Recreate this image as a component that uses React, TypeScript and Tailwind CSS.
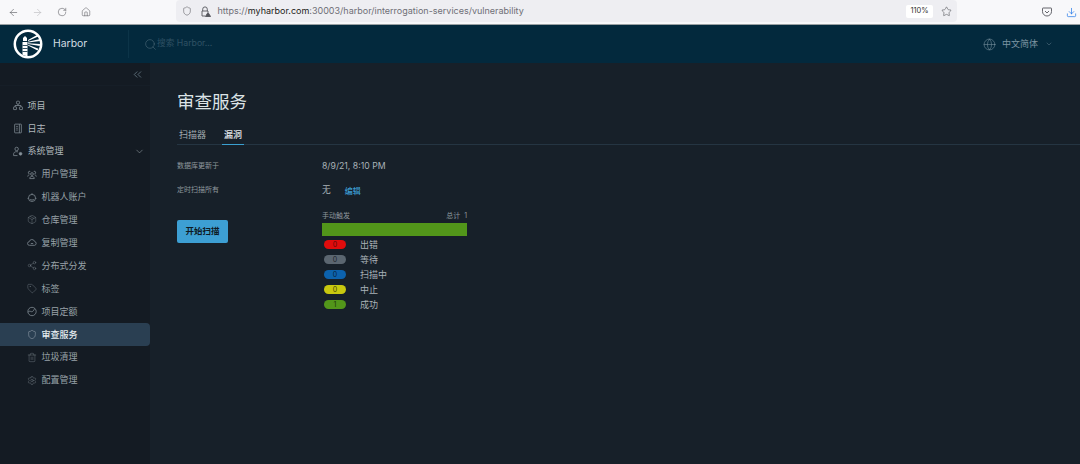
import {
  ArrowLeft,
  ArrowRight,
  ChevronDown,
  ChevronsLeft,
  Download,
  Globe,
  Home,
  Package,
  RotateCw,
  Search,
  Settings,
  Share2,
  Shield,
  Star,
  Tag,
  Trash2,
} from "lucide-react";
import type { ReactNode } from "react";

const font = "font-['Inter','Noto_Sans_CJK_SC',sans-serif]";

function Logo() {
  return (
    <svg width="30" height="30" viewBox="0 0 30 30" fill="none">
      <circle cx="15" cy="15" r="13.2" stroke="#fff" strokeWidth="2.5" />
      <path d="M9.500 13h5v14.500l-5-1.800z" fill="#fff" />
      <path d="M10 12V9l2-2 2 2v3z" fill="#fff" />
      <path d="M15 11l9-5 1.200 1.500L15 12zM15 12.800l12-2.800.3 2L15 13.500zM15 14.300l12 .7-.2 2L15 15zM15 15.700l10.500 4-1 1.700L15 16.500z" fill="#fff" />
      <path d="M9.500 16.500h5M9.500 19.500h5M9.500 22.500h5" stroke="#03293d" strokeWidth="0.8" />
    </svg>
  );
}

function Glyph({ children }: { children: ReactNode }) {
  return (
    <svg width="11" height="11" viewBox="0 0 11 11" fill="none" stroke="currentColor" strokeWidth="0.8">
      {children}
    </svg>
  );
}

const projectIcon = (
  <Glyph>
    <rect x="3.800" y="0.800" width="3.400" height="3" rx="1" />
    <path d="M5.500 3.800v1.700M2.200 7V5.500h6.600V7" />
    <rect x="0.500" y="7" width="3.400" height="3" rx="0.600" />
    <rect x="7.100" y="7" width="3.400" height="3" rx="0.600" />
  </Glyph>
);

const logIcon = (
  <Glyph>
    <rect x="1.800" y="0.700" width="7.400" height="9.600" rx="0.500" />
    <path d="M7 0.700v9.600M3.500 3.200h1.800M3.500 5.200h1.800M3.500 7.200h1.800" />
  </Glyph>
);

const adminIcon = (
  <Glyph>
    <circle cx="4" cy="2.700" r="1.900" />
    <path d="M0.700 10V8c0-1.300 1.300-2.300 3.300-2.300.6 0 1.100.1 1.500.2M0.700 10H5" />
    <circle cx="8.300" cy="8" r="1.500" fill="currentColor" />
  </Glyph>
);

const usersIcon = (
  <Glyph>
    <circle cx="5.500" cy="5" r="1.500" />
    <path d="M3 10c0-1.500 1-2.500 2.500-2.500S8 8.500 8 10zM2.800 4.600a1.300 1.300 0 1 1 .8-2.300M8.200 4.600a1.300 1.300 0 1 0-.8-2.300M0.800 7.800c0-1.200.8-1.900 1.800-1.900M10.200 7.800c0-1.200-.8-1.900-1.800-1.900" />
  </Glyph>
);

const robotIcon = (
  <Glyph>
    <circle cx="5.500" cy="6" r="3.900" />
    <path d="M5.500 2.100V.800M3.500 7.600c1.200.8 2.800.8 4 0M0.600 6.500h1M9.400 6.500h1" />
  </Glyph>
);

const cloudIcon = (
  <Glyph>
    <path d="M2.700 8.600a2 2 0 0 1-.2-4 3 3 0 0 1 5.800-.3 2.200 2.200 0 0 1 .1 4.300z" />
    <path d="M4.200 6.600h2.600" />
  </Glyph>
);

const quotaIcon = (
  <Glyph>
    <circle cx="5.500" cy="5.500" r="4.600" />
    <path d="M1 6.300c1.600-1.900 2.600-.9 4-.6 1.300.3 2.400-1.500 3.400-3.400" />
  </Glyph>
);

const pocketIcon = (
  <svg width="10" height="10" viewBox="0 0 10 10" fill="none" stroke="currentColor" strokeWidth="0.9">
    <path d="M1 1h8a.5.5 0 0 1 .5.5v3a4.500 4.500 0 0 1-9 0v-3A.5.5 0 0 1 1 1z" />
    <path d="M3 4l2 2 2-2" />
  </svg>
);

const lockIcon = (
  <svg width="11" height="11" viewBox="0 0 11 11" fill="none" stroke="currentColor" strokeWidth="0.9">
    <path d="M2.700 5V3.200a2.300 2.300 0 0 1 4.600 0V5" />
    <path d="M5 10H2V5h6v1" />
    <path d="M8 6.500l2.600 4H5.400z" fill="currentColor" />
  </svg>
);

function NavItem({
  icon,
  label,
  sub,
  active,
  trailing,
}: {
  icon: ReactNode;
  label: string;
  sub?: boolean;
  active?: boolean;
  trailing?: ReactNode;
}) {
  return (
    <div
      className={`flex h-[22.900px] w-[150px] items-center rounded-r-[4px] text-[9px] ${
        sub ? "pl-[27px]" : "pl-[13px]"
      } ${active ? "bg-[#2a3f52] font-medium text-[#e6edf0]" : sub ? "text-[#98a2a8]" : "text-[#b0b8bc]"}`}
    >
      <span className={`flex w-[10px] justify-center ${active ? "text-[#c8d2d8]" : "text-[#87929a]"}`}>{icon}</span>
      <span className="ml-[4.600px]">{label}</span>
      {trailing}
    </div>
  );
}

function StatusRow({ color, count, text, label }: { color: string; count: number; text: string; label: string }) {
  return (
    <div className="flex h-[15.100px] items-center pl-[2px]">
      <span
        className={`flex h-[9px] w-[22px] items-center justify-center rounded-full text-[7px] leading-none ${color} ${text}`}
      >
        {count}
      </span>
      <span className="ml-[14px] -translate-y-[0.5px] text-[9px] text-[#a9b2b7]">{label}</span>
    </div>
  );
}

export default function App() {
  const i = 11;
  const s = 0.9;
  return (
    <div className={`flex h-[464px] w-[1080px] flex-col overflow-hidden bg-[#172029] ${font}`}>
      {/* browser toolbar */}
      <div className="box-content flex h-[24px] flex-none items-center border-b border-[#9aa0a3] bg-[#f8f8fa]">
        <ArrowLeft size={11} strokeWidth={1.3} className="ml-[8px] flex-none text-[#55565c]" />
        <ArrowRight size={11} strokeWidth={1.3} className="ml-[13px] flex-none text-[#b8b8bc]" />
        <RotateCw size={10} strokeWidth={1.3} className="ml-[14px] flex-none text-[#55565c]" />
        <Home size={10} strokeWidth={1.3} className="ml-[14px] flex-none text-[#55565c]" />
        <div className="ml-[84.500px] flex h-[22px] w-[781.500px] flex-none items-center self-start rounded-[4px] bg-[#eeeef2] pl-[6px] pr-[5.500px]">
          <Shield size={10} strokeWidth={1.3} className="flex-none text-[#55565c]" />
          <span className="ml-[8px] flex-none text-[#55565c]">{lockIcon}</span>
          <span className="ml-[7px] whitespace-nowrap text-[9px] text-[#6f6f76]">
            https://<span className="text-[#1d1d20]">myharbor.com</span>:30003/harbor/interrogation-services/vulnerability
          </span>
          <div className="ml-auto flex items-center">
            <span className="flex h-[13px] w-[27px] items-center justify-center rounded-[2px] bg-white text-[7.500px] text-[#333]">
              110%
            </span>
            <Star size={11} strokeWidth={1.3} className="ml-[7.500px] text-[#55565c]" />
          </div>
        </div>
        <span className="ml-[85px] flex-none text-[#55565c]">{pocketIcon}</span>
        <Download size={11} strokeWidth={1.5} className="ml-[13.500px] flex-none text-[#1a73e8]" />
      </div>

      {/* harbor header */}
      <div className="flex h-[38px] flex-none items-center bg-[#03293d]">
        <div className="flex h-[28px] w-[129px] flex-none items-center border-r border-[#0c3448] pl-[13px]">
          <Logo />
          <span className="ml-[10px] text-[10.400px] text-[#d3dde2]">Harbor</span>
        </div>
        <Search size={13} strokeWidth={1} className="ml-[15px] flex-none text-[#54707f]" />
        <span className="text-[8.700px] text-[#2f5164]">搜索 Harbor...</span>
        <div className="ml-auto flex items-center pr-[27px] text-[#7e96a3]">
          <Globe size={13} strokeWidth={1} />
          <span className="ml-[6px] text-[9px]">中文简体</span>
          <ChevronDown size={8} strokeWidth={1.2} className="ml-[7px]" />
        </div>
      </div>

      <div className="flex min-h-0 flex-1">
        {/* sidebar */}
        <aside className="w-[150px] flex-none bg-[#141b23]">
          <div className="flex h-[23px] items-center justify-end border-b border-[#161e27] pr-[6px] text-[#7b919e]">
            <ChevronsLeft size={13} strokeWidth={1.2} />
          </div>
          <div className="pt-[8px]">
            <NavItem icon={projectIcon} label="项目" />
            <NavItem icon={logIcon} label="日志" />
            <NavItem
              icon={adminIcon}
              label="系统管理"
              trailing={<ChevronDown size={11} strokeWidth={1.2} className="ml-auto mr-[5.500px] text-[#9aa5ab]" />}
            />
            <NavItem sub icon={usersIcon} label="用户管理" />
            <NavItem sub icon={robotIcon} label="机器人账户" />
            <NavItem sub icon={<Package size={i} strokeWidth={s} />} label="仓库管理" />
            <NavItem sub icon={cloudIcon} label="复制管理" />
            <NavItem sub icon={<Share2 size={i} strokeWidth={s} />} label="分布式分发" />
            <NavItem sub icon={<Tag size={i} strokeWidth={s} />} label="标签" />
            <NavItem sub icon={quotaIcon} label="项目定额" />
            <NavItem sub active icon={<Shield size={i} strokeWidth={s} />} label="审查服务" />
            <NavItem sub icon={<Trash2 size={i} strokeWidth={s} />} label="垃圾清理" />
            <NavItem sub icon={<Settings size={i} strokeWidth={s} />} label="配置管理" />
          </div>
        </aside>

        {/* main content */}
        <main className="min-w-0 flex-1 pl-[27px] pt-[26px]">
          <h1 className="text-[17.500px] leading-[26px] text-[#dce3e6]">审查服务</h1>
          <div className="mt-[10px] flex h-[20px] border-b border-[#253542] text-[9px]">
            <span className="flex h-[20px] w-[30px] items-start pl-[2px] pt-[3px] text-[#a4adb2]">扫描器</span>
            <span className="ml-[15px] flex h-[20px] w-[22px] items-start justify-center border-b border-[#3aa0d0] pt-[3px] font-medium text-[#e3e9ec]">
              漏洞
            </span>
          </div>
          <div className="flex pt-[15px]">
            <div className="w-[145px] flex-none text-[7px] text-[#8f989d]">
              <div className="flex h-[13px] items-center">数据库更新于</div>
              <div className="mt-[11px] flex h-[13px] items-center">定时扫描所有</div>
              <button className="mt-[23px] block h-[23px] w-[51px] rounded-[2px] bg-[#3d9fd3] text-[8.500px] font-semibold text-[#0e1a24]">
                开始扫描
              </button>
            </div>
            <div className="w-[145px] flex-none">
              <div className="flex h-[13px] items-center text-[8.700px] text-[#a9b2b7]">8/9/21, 8:10 PM</div>
              <div className="mt-[11px] flex h-[13px] items-center text-[8.700px] text-[#a9b2b7]">
                无
                <span className="ml-[14px] text-[8px] font-medium text-[#3d9fd3]">编辑</span>
              </div>
              <div className="mt-[14px] flex h-[10px] items-center justify-between text-[7px] text-[#8f989d]">
                <span>手动触发</span>
                <span>总计&nbsp;&nbsp;1</span>
              </div>
              <div className="mt-[2px] h-[13px] bg-[#52961a]" />
              <div className="mt-[1px]">
                <StatusRow color="bg-[#e00c0c]" text="text-[#5c0a0a]" count={0} label="出错" />
                <StatusRow color="bg-[#5b6670]" text="text-[#1d242b]" count={0} label="等待" />
                <StatusRow color="bg-[#0c62ad]" text="text-[#08233d]" count={0} label="扫描中" />
                <StatusRow color="bg-[#c8c80f]" text="text-[#44440a]" count={0} label="中止" />
                <StatusRow color="bg-[#52961a]" text="text-[#1f3a0a]" count={1} label="成功" />
              </div>
            </div>
          </div>
        </main>
      </div>
    </div>
  );
}
